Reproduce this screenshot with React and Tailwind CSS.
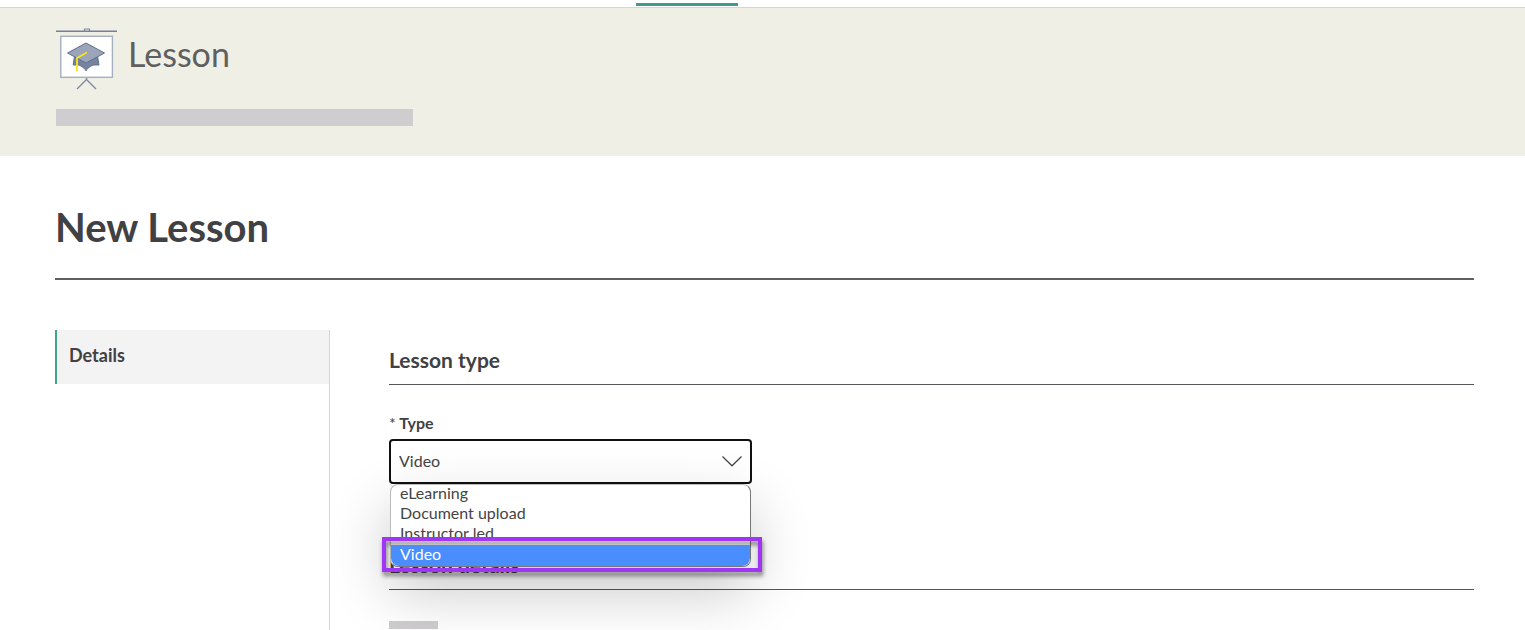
import React, { useState } from 'react';

const lessonTypes = ['eLearning', 'Document upload', 'Instructor led', 'Video'];

const LessonIcon = () => (
  <svg width="62" height="62" viewBox="0 0 62 62" fill="none" aria-hidden="true">
    <path d="M28.5 3V1h5v2" stroke="#7c89a1" strokeWidth="1.2" />
    <path d="M0 3.3h61" stroke="#72819a" strokeWidth="1.4" />
    <rect x="4.8" y="8.3" width="51.6" height="41" fill="#fff" stroke="#a5afc2" strokeWidth="1.4" />
    <path d="M30.5 50v2.5M21 61l9.5-9.5L40 61" stroke="#7c89a1" strokeWidth="1.4" />
    <path
      d="M18.5 28 17.2 37c4.3 0 6.300-.5 8.300 1.500 2 1 3.500 2.500 4.500 4.300 1-1.800 2.500-3.300 4.500-4.300 2-2 4-1.500 8.500-1.500L41.500 28z"
      fill="#7683a0"
      stroke="#626f8a"
      strokeLinejoin="round"
    />
    <path d="M30 15 48.500 25 30 35 11.500 25z" fill="#9ba5ba" stroke="#626f8a" strokeLinejoin="round" />
    <path d="M31 24.500 21 30v13.500" stroke="#fbe612" strokeWidth="1.8" />
  </svg>
);

const SectionHeading = ({ children }) => (
  <h2 className="border-b border-[#55565a] pb-3 text-[21px] leading-6 font-bold">{children}</h2>
);

const TypeSelect = () => {
  const [type, setType] = useState('Video');

  return (
    <div className="relative w-[363px]">
      <label htmlFor="lesson-type" className="block text-base leading-5 font-bold">
        <span className="font-normal">*</span> Type
      </label>
      <div className="relative mt-1.5">
        <select
          id="lesson-type"
          value={type}
          onChange={(e) => setType(e.target.value)}
          className="block h-[45px] w-full appearance-none rounded border-2 border-[#111] bg-white px-2 pb-0.5 text-base text-[#444]"
        >
          {lessonTypes.map((name) => (
            <option key={name}>{name}</option>
          ))}
        </select>
        <svg
          className="pointer-events-none absolute top-[17px] right-2.5"
          width="20"
          height="11"
          viewBox="0 0 20 11"
          fill="none"
          aria-hidden="true"
        >
          <path d="M.5.5 10 9.8 19.5.5" stroke="#444" strokeWidth="1.2" />
        </svg>
      </div>

      {/* Open option list */}
      <ul
        role="listbox"
        aria-label="Type"
        className="absolute top-full right-px left-px z-10 rounded-lg border border-[#777] border-t-[#bbb] border-l-[#bbb] bg-white shadow-[0_24px_60px_rgba(0,0,0,0.22)]"
      >
        {lessonTypes.map((name) => {
          const selected = name === type;
          return (
            <li key={name} role="option" aria-selected={selected} className="relative" onClick={() => setType(name)}>
              {selected && (
                <span className="absolute -top-2 -right-3 -bottom-1.5 -left-[9px] border-4 border-[#a035f5] drop-shadow-[1px_4px_2px_rgba(0,0,0,0.45)]" />
              )}
              <span
                className={`block px-[9px] text-base ${selected ? 'relative rounded-b-lg bg-[#4a8dff] pb-1 leading-[17px] text-white' : 'pb-1 leading-4 text-[#444]'}`}
              >
                {name}
              </span>
            </li>
          );
        })}
      </ul>
    </div>
  );
};

const App = () => (
  <div className="flex min-h-screen flex-col bg-white font-['Lato',sans-serif] text-[#414042]">
    <nav className="h-2 border-b border-[#d5d5d5] pt-[3px]">
      <div className="ml-[636px] h-[3px] w-[102px] bg-[#43998a]" />
    </nav>

    <header className="bg-[#f0efe6] px-14 pt-5 pb-[30px]">
      <div className="flex items-start gap-[10px]">
        <LessonIcon />
        <p className="text-[34px] leading-[52px] text-[#5f5f60]">Lesson</p>
      </div>
      <div className="mt-[19px] h-[17px] w-[357px] bg-[#d0cdd0]" />
    </header>

    <main className="flex flex-1 flex-col pr-[51px] pl-[55px]">
      <h1 className="border-b-2 border-[#5f5f61] pt-[46px] pb-[26px] text-[40px] leading-[50px] font-bold">
        New Lesson
      </h1>

      <div className="mt-[50px] flex flex-1 items-stretch">
        <aside className="w-[275px] border-r border-[#d5d5d5]">
          <a
            href="#details"
            className="block h-[54px] border-l-2 border-[#3fa58c] bg-[#f3f3f3] px-3 text-lg leading-[50px] font-bold"
          >
            Details
          </a>
        </aside>

        <div className="ml-[59px] flex-1 pt-[18px]">
          <SectionHeading>Lesson type</SectionHeading>
          <div className="pt-7 pb-[69px]">
            <TypeSelect />
          </div>
          <div id="details">
            <SectionHeading>Lesson details</SectionHeading>
            <div className="mt-[31px] h-2 w-[49px] bg-[#d0cdd0]" />
          </div>
        </div>
      </div>
    </main>
  </div>
);

export default App;
